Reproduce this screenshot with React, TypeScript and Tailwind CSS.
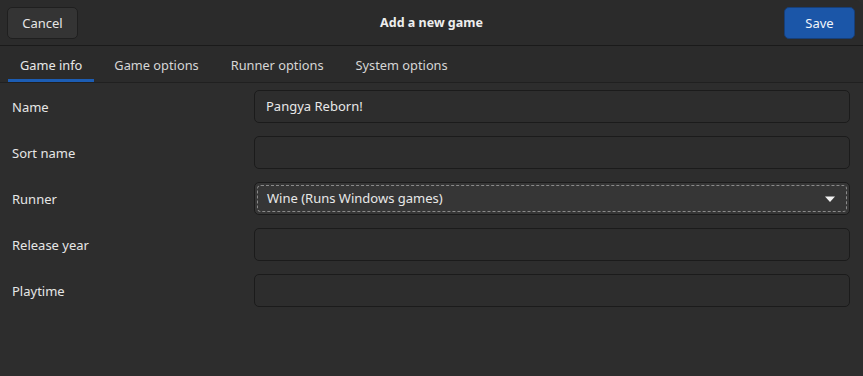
import { useState } from "react";

const tabs = ["Game info", "Game options", "Runner options", "System options"];

function Field({ label, value }: { label: string; value?: string }) {
  return (
    <div className="flex h-[46px]">
      <div className="w-[254px] pl-3 pt-[15px] text-[13px] text-[#e6e6e6]">{label}</div>
      <div className="flex-1 mt-[7px] mr-[13px] h-[33px] rounded-[5px] border border-[#1b1b1b] bg-[#2d2d2d] flex items-center px-[11px] pt-[1px] text-[13px] text-[#e8e8e8]">
        {value}
      </div>
    </div>
  );
}

export default function App() {
  const [tab, setTab] = useState(0);
  return (
    <div
      className="w-[863px] h-[376px] bg-[#2d2d2d] overflow-hidden flex flex-col"
      style={{ fontFamily: '"Noto Sans", "DejaVu Sans", sans-serif' }}
    >
      <div className="h-[46px] bg-[#2b2b2b] border-b border-[#1a1a1a] rounded-tr-[8px] flex items-center justify-between px-[7px] pt-[1px] relative">
        <button className="h-[32px] w-[71px] rounded-[5px] bg-[#343434] border border-[#1f1f1f] pt-[1px] text-[13px] text-[#e6e6e6]">
          Cancel
        </button>
        <div className="absolute left-0 right-0 top-[15px] text-center text-[12.5px] leading-[16px] font-bold text-[#eeeeee] pointer-events-none">
          Add a new game
        </div>
        <button className="h-[32px] w-[71px] mr-[1px] rounded-[5px] bg-[#1b56a8] border border-[#173f78] pt-[1px] text-[13px] text-[#f2f5fa]">
          Save
        </button>
      </div>
      <div className="h-[37px] bg-[#2b2b2b] border-b border-[#202020] flex pl-[8px]">
        {tabs.map((t, i) => (
          <button
            key={t}
            onClick={() => setTab(i)}
            className={
              "relative h-full px-[12px] mr-[8px] pt-[3px] text-[12.8px] " +
              (i === tab ? "text-[#e8e8e8]" : "text-[#d6d6d6]")
            }
          >
            {t}
            {i === tab && <span className="absolute left-0 right-0 bottom-0 h-[3px] bg-[#1c5db4]" />}
          </button>
        ))}
      </div>
      <div>
        <Field label="Name" value="Pangya Reborn!" />
        <Field label="Sort name" />
        <div className="flex h-[46px]">
          <div className="w-[254px] pl-3 pt-[15px] text-[13px] text-[#e6e6e6]">Runner</div>
          <div className="flex-1 mt-[7px] mr-[13px] h-[33px] rounded-[5px] border border-[#1b1b1b] bg-[#363636] p-[2px]">
            <div className="h-full rounded-[4px] border border-dashed border-[#8a8a8a] flex items-center justify-between pl-[9px] pr-[10px] pt-[1px] text-[13px] text-[#e8e8e8]">
              <span>Wine (Runs Windows games)</span>
              <svg width="12" height="8" viewBox="0 0 12 8">
                <path d="M1 1.5 L11 1.5 L6 7 Z" fill="#f2f2f2" />
              </svg>
            </div>
          </div>
        </div>
        <Field label="Release year" />
        <Field label="Playtime" />
      </div>
    </div>
  );
}
